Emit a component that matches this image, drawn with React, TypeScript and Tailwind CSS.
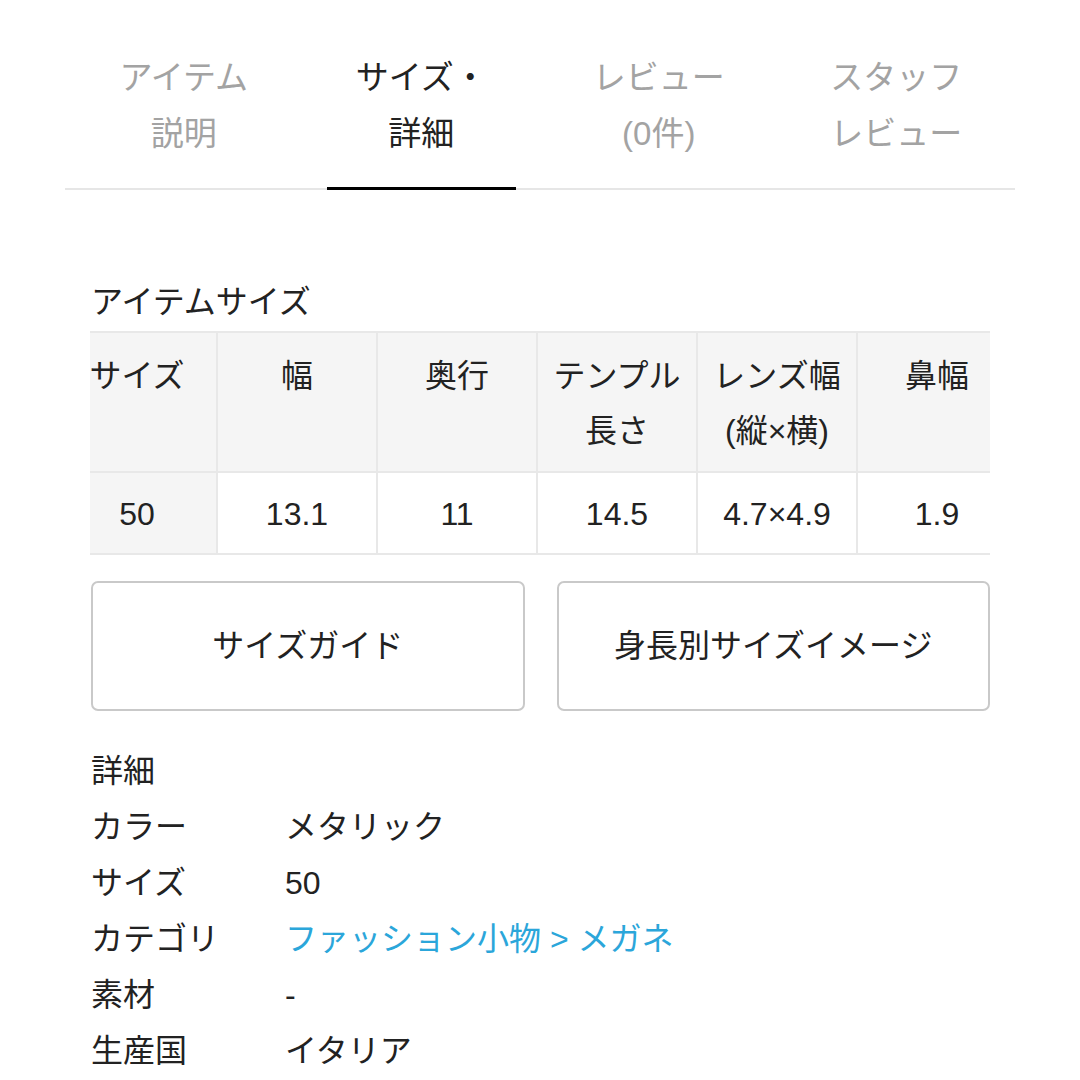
import React from "react";

const tabs = [
  { lines: ["アイテム", "説明"], active: false },
  { lines: ["サイズ・", "詳細"], active: true },
  { lines: ["レビュー", "(0件)"], active: false },
  { lines: ["スタッフ", "レビュー"], active: false },
];

const heads = [["サイズ"], ["幅"], ["奥行"], ["テンプル", "長さ"], ["レンズ幅", "(縦×横)"], ["鼻幅"]];
const values = ["50", "13.1", "11", "14.5", "4.7×4.9", "1.9"];

const details: { label: string; value: string; link?: boolean }[] = [
  { label: "カラー", value: "メタリック" },
  { label: "サイズ", value: "50" },
  { label: "カテゴリ", value: "ファッション小物 > メガネ", link: true },
  { label: "素材", value: "-" },
  { label: "生産国", value: "イタリア" },
];

export default function App() {
  return (
    <div
      className="h-[1080px] w-[1080px] overflow-hidden bg-white text-[32px] leading-[56px] text-[#222]"
      style={{ fontFamily: '"Liberation Sans", "Noto Sans CJK JP", sans-serif' }}
    >
      <div className="mx-[65px] flex border-b-2 border-[#e6e6e6]">
        {tabs.map((t, i) => (
          <div
            key={i}
            className={`relative flex-1 pt-[50px] pb-[26px] text-center text-[33px] ${
              t.active ? "text-[#222]" : "text-[#a3a3a3]"
            }`}
          >
            {t.lines.map((l) => (
              <div key={l}>{l}</div>
            ))}
            {t.active && (
              <div className="absolute bottom-[-2px] left-[24px] right-[24px] h-[3px] bg-black" />
            )}
          </div>
        ))}
      </div>

      <div className="mx-[90px] mt-[86px]">
        <div className="h-[52px] pl-[1px] leading-[52px]">アイテムサイズ</div>

        <div className="mt-[3px] w-[900px] overflow-hidden">
          <table className="ml-[-34px] border-collapse table-fixed" style={{ width: 962 }}>
            <thead>
              <tr>
                {heads.map((h, i) => (
                  <th
                    key={i}
                    className="h-[138px] w-[160px] border-2 border-[#e8e8e8] bg-[#f5f5f5] pt-[16px] pb-[12px] align-top text-[32px] font-normal leading-[55px]"
                  >
                    {h.map((l) => (
                      <div key={l}>{l}</div>
                    ))}
                  </th>
                ))}
              </tr>
            </thead>
            <tbody>
              <tr>
                {values.map((v, i) => (
                  <td
                    key={i}
                    className={`h-[82px] w-[160px] border-2 border-[#e8e8e8] pt-[2px] text-center leading-[55px] ${
                      i === 0 ? "bg-[#f5f5f5]" : "bg-white"
                    }`}
                  >
                    {v}
                  </td>
                ))}
              </tr>
            </tbody>
          </table>
        </div>

        <div className="mt-[26px] flex gap-[32px] pl-[1px]">
          <button className="h-[130px] w-[434px] rounded-[7px] border-2 border-[#c9c9c9] bg-white">
            サイズガイド
          </button>
          <button className="h-[130px] w-[434px] rounded-[7px] border-2 border-[#c9c9c9] bg-white">
            身長別サイズイメージ
          </button>
        </div>

        <div className="mt-[32px] pl-[1px]">
          <div>詳細</div>
          {details.map((d) => (
            <div key={d.label} className="flex">
              <div className="w-[194px]">{d.label}</div>
              <div className={d.link ? "text-[#2ba6da]" : ""}>{d.value}</div>
            </div>
          ))}
        </div>
      </div>
    </div>
  );
}
